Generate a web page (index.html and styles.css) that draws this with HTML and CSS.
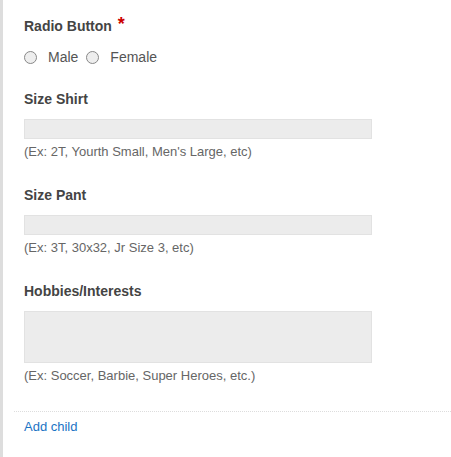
FILE: index.html
```html
<!DOCTYPE html>
<html lang="en">
<head>
    <meta charset="UTF-8">
    <title>Child form</title>
    <link rel="stylesheet" href="styles.css">
</head>
<body>
    <div class="panel">
        <div class="field field-radio">
            <div class="label">Radio Button <span class="req">*</span></div>
            <div class="radios">
                <label><span class="radio"></span>Male</label>
                <label><span class="radio"></span>Female</label>
            </div>
        </div>
        <div class="field">
            <div class="label">Size Shirt</div>
            <div class="input"></div>
            <div class="help">(Ex: 2T, Yourth Small, Men's Large, etc)</div>
        </div>
        <div class="field">
            <div class="label">Size Pant</div>
            <div class="input"></div>
            <div class="help">(Ex: 3T, 30x32, Jr Size 3, etc)</div>
        </div>
        <div class="field">
            <div class="label">Hobbies/Interests</div>
            <div class="input textarea"></div>
            <div class="help">(Ex: Soccer, Barbie, Super Heroes, etc.)</div>
        </div>
        <div class="footer">
            <a href="#">Add child</a>
        </div>
    </div>
</body>
</html>
```

FILE: styles.css
```css
body {
    margin: 0;
    font-family: "Liberation Sans", Arial, sans-serif;
    font-size: 13px;
    color: #555;
    background: #fff;
}
.panel {
    border-left: 3px solid #ddd;
    height: 457px;
    box-sizing: border-box;
    padding-top: 19px;
}
.field {
    padding: 0 0 0 21px;
    margin-bottom: 28px;
}
.field-radio {
    margin-bottom: 26px;
}
.field-radio .label {
    margin-bottom: 15px;
}
.label {
    font-size: 14px;
    font-weight: bold;
    color: #444;
    line-height: 14px;
    margin-bottom: 13px;
}
.req {
    color: #c00;
    font-size: 18px;
    line-height: 0;
    position: relative;
    top: -1px;
    margin-left: 2px;
}
.radios {
    display: flex;
    align-items: center;
    height: 18px;
}
.radios label {
    display: flex;
    align-items: center;
    margin-right: 8px;
    font-size: 14px;
}
.radio {
    width: 11px;
    height: 11px;
    border: 1px solid #888;
    border-radius: 50%;
    background: #eee;
    margin-right: 11px;
}
.input {
    width: 346px;
    height: 18px;
    background: #ececec;
    border: 1px solid #e2e2e2;
}
.textarea {
    height: 50px;
}
.help {
    color: #666;
    line-height: 16px;
    margin-top: 5px;
}
.footer {
    margin-top: -1px;
    margin-left: 11px;
    border-top: 1px dotted #ddd;
    padding: 7px 0 0 10px;
}
.footer a {
    color: #1a73c4;
    text-decoration: none;
}
```
